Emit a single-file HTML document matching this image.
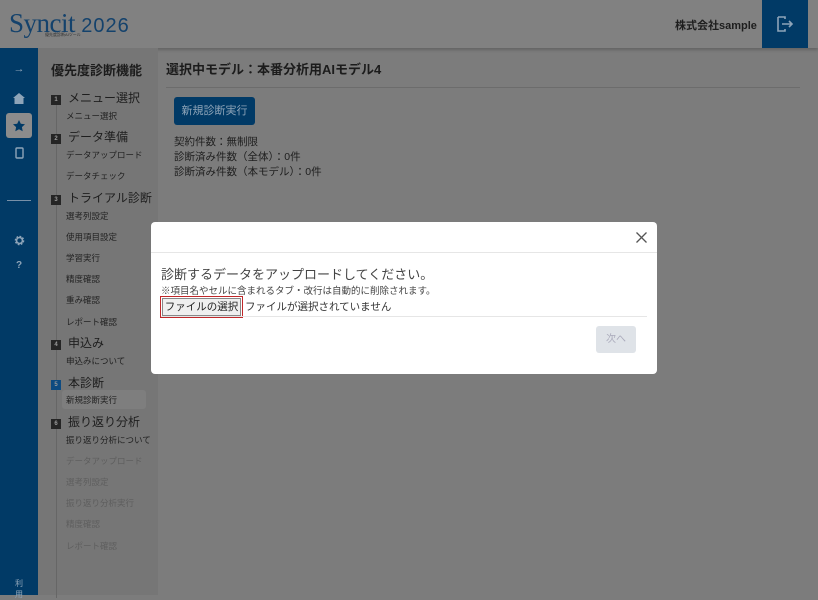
<!DOCTYPE html>
<html><head><meta charset="utf-8"><style>
*{margin:0;padding:0;box-sizing:border-box}
body{width:818px;height:595px;overflow:hidden;position:relative;background:#7c7c7c;font-family:"Liberation Sans","Noto Sans CJK JP",sans-serif;color:#222}
.hdr{position:absolute;left:0;top:0;width:818px;height:48px;background:#818181;box-shadow:0 2px 3px rgba(0,0,0,.2)}
.logo{position:absolute;left:9px;top:8px;font-family:"Liberation Serif",serif;font-size:27px;color:#14426c;letter-spacing:-0.5px}
.logo span{font-size:20px;font-family:"Liberation Sans",sans-serif;letter-spacing:1px}
.sub{position:absolute;left:45px;top:32px;font-size:4px;color:#333}
.co{position:absolute;left:675px;top:17px;font-size:11px;font-weight:bold;color:#1e1e1e}
.out{position:absolute;left:762px;top:0;width:46px;height:48px;background:#013a66}
.side{position:absolute;left:0;top:48px;width:38px;height:547px;background:#013a66}
.ic{position:absolute;left:0;width:38px;text-align:center;color:#8ea4b8;font-size:11px}
.menu{position:absolute;left:38px;top:48px;width:120px;height:547px;background:#767676}
.menu .t{position:absolute;left:13px;top:12px;font-size:13px;font-weight:bold;color:#1c1c1c}
.line{position:absolute;left:18px;top:50px;width:1px;height:500px;background:#666}
.h{position:absolute;left:13px;font-size:12px;color:#1e1e1e}
.h b{display:inline-block;width:10px;height:10px;background:#252525;color:#999;font-size:6px;text-align:center;line-height:10px;margin-right:7px;vertical-align:1px}
.i{position:absolute;left:28px;font-size:8.5px;color:#222}
.i.d{color:#5e5e5e}
.main .ttl{position:absolute;left:166px;top:59px;font-size:13px;font-weight:bold;color:#1c1c1c}
.hr{position:absolute;left:166px;top:87px;width:634px;height:1px;background:#6c6c6c}
.btn{position:absolute;left:174px;top:97px;width:81px;height:28px;background:#013a66;border-radius:3px;color:#8ea4b8;font-size:11px;text-align:center;line-height:28px}
.txt{position:absolute;left:174px;top:135px;font-size:10.5px;line-height:15px;color:#1e1e1e}
.modal{position:absolute;left:151px;top:222px;width:506px;height:152px;background:#fff;border-radius:4px}
.mh{position:absolute;left:0;top:30px;width:506px;height:1px;background:#e6e6e6}
.m1{position:absolute;left:10px;top:42px;font-size:13px;color:#444}
.m2{position:absolute;left:10px;top:61px;font-size:9.5px;color:#444}
.fb{position:absolute;left:9px;top:74px;width:83px;height:22px;border:1px solid #c0282a;padding:1px}
.fb div{width:100%;height:100%;background:#efefef;border:1px solid #888;font-size:10.5px;line-height:16px;text-align:center;color:#222}
.fn{position:absolute;left:94px;top:77px;font-size:10.5px;color:#333}
.mf{position:absolute;left:10px;top:94px;width:486px;height:1px;background:#e6e6e6}
.nx{position:absolute;left:445px;top:104px;width:40px;height:27px;background:#dfe3e8;border-radius:3px;color:#aab;font-size:10px;text-align:center;line-height:27px}
</style></head><body>
<div class="hdr">
<div class="logo">Syncit <span>2026</span></div>
<div class="sub">優先度診断AIツール</div>
<div class="co">株式会社sample</div>
<div class="out"><svg width="46" height="48"><path d="M16 17h7v2M16 17v14h7v-2M20 24h10M27 21l3 3-3 3" stroke="#8ea4b8" stroke-width="1.6" fill="none"/></svg></div>
</div>
<div class="side">
<div class="ic" style="top:15px">→</div>
<svg style="position:absolute;left:13px;top:45px" width="12" height="11"><path d="M6 0L0 5h1.5v6h9V5H12z" fill="#8ea4b8"/></svg>
<div style="position:absolute;left:6px;top:65px;width:26px;height:25px;background:#8c8c8c;border-radius:3px"><svg width="26" height="25"><path d="M13 7l1.8 3.8 4.2.5-3.1 2.8.8 4.1L13 16.2 9.3 18.2l.8-4.1L7 11.3l4.2-.5z" fill="#013a66"/></svg></div>
<svg style="position:absolute;left:15px;top:99px" width="9" height="12"><rect x="1" y="1" width="7" height="10" rx="1" stroke="#8ea4b8" stroke-width="1.4" fill="none"/></svg>
<div style="position:absolute;left:7px;top:152px;width:24px;height:1px;background:#7890a8"></div>
<svg style="position:absolute;left:14px;top:187px" width="11" height="11" viewBox="0 0 11 11"><circle cx="5.5" cy="5.5" r="3.6" fill="none" stroke="#8ea4b8" stroke-width="2.4" stroke-dasharray="1.6 1.2"/><circle cx="5.5" cy="5.5" r="3" fill="none" stroke="#8ea4b8" stroke-width="1.6"/></svg>
<div class="ic" style="top:212px;font-weight:bold;font-size:10px">?</div>
<div class="ic" style="top:530px;font-size:8px">利<br>用</div>
</div>
<div class="menu">
<div class="t">優先度診断機能</div>
<div class="line"></div>
<div class="h" style="top:41px"><b>1</b>メニュー選択</div>
<div class="i" style="top:62px">メニュー選択</div>
<div class="h" style="top:80px"><b>2</b>データ準備</div>
<div class="i" style="top:101px">データアップロード</div>
<div class="i" style="top:122px">データチェック</div>
<div class="h" style="top:141px"><b>3</b>トライアル診断</div>
<div class="i" style="top:162px">選考列設定</div>
<div class="i" style="top:183px">使用項目設定</div>
<div class="i" style="top:204px">学習実行</div>
<div class="i" style="top:225px">精度確認</div>
<div class="i" style="top:246px">重み確認</div>
<div class="i" style="top:268px">レポート確認</div>
<div class="h" style="top:286px"><b>4</b>申込み</div>
<div class="i" style="top:307px">申込みについて</div>
<div class="h" style="top:326px"><b style="background:#0d4a80">5</b>本診断</div>
<div style="position:absolute;left:24px;top:342px;width:84px;height:19px;background:#7e7e7e;border-radius:3px"></div>
<div class="i" style="top:346px">新規診断実行</div>
<div class="h" style="top:365px"><b>6</b>振り返り分析</div>
<div class="i" style="top:386px">振り返り分析について</div>
<div class="i d" style="top:407px">データアップロード</div>
<div class="i d" style="top:428px">選考列設定</div>
<div class="i d" style="top:449px">振り返り分析実行</div>
<div class="i d" style="top:470px">精度確認</div>
<div class="i d" style="top:492px">レポート確認</div>
</div>
<div class="main">
<div class="ttl">選択中モデル：本番分析用AIモデル4</div>
<div class="hr"></div>
<div class="btn">新規診断実行</div>
<div class="txt">契約件数：無制限<br>診断済み件数（全体）：0件<br>診断済み件数（本モデル）：0件</div>
</div>
<div class="modal">
<svg style="position:absolute;left:485px;top:10px" width="11" height="11"><path d="M0.5 0.5l10 10M10.5 0.5l-10 10" stroke="#555" stroke-width="1.3"/></svg>
<div class="mh"></div>
<div class="m1">診断するデータをアップロードしてください。</div>
<div class="m2">※項目名やセルに含まれるタブ・改行は自動的に削除されます。</div>
<div class="fb"><div>ファイルの選択</div></div>
<div class="fn">ファイルが選択されていません</div>
<div class="mf"></div>
<div class="nx">次へ</div>
</div>
</body></html>
